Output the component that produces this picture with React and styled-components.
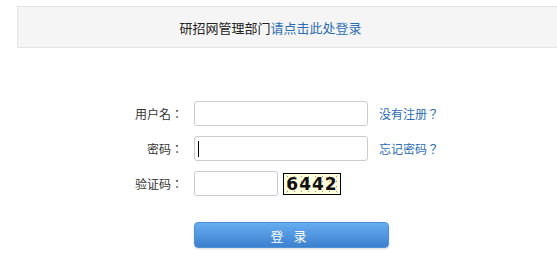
import React from 'react';
import styled, { createGlobalStyle } from 'styled-components';

const GlobalStyle = createGlobalStyle`
  html, body {
    margin: 0;
    padding: 0;
    background: #ffffff;
    overflow: hidden;
  }
  body {
    font-family: "Liberation Sans", "Noto Sans CJK SC", sans-serif;
    color: #333333;
  }
`;

const Page = styled.div`
  width: 557px;
  height: 271px;
  padding-top: 6px;
  box-sizing: border-box;
`;

const NoticeBar = styled.div`
  margin-left: 17px;
  width: 545px;
  height: 42px;
  box-sizing: border-box;
  border: 1px solid #e4e4e4;
  background: #f5f5f5;
  padding-right: 38px;
  display: flex;
  align-items: center;
  justify-content: center;
  font-size: 13px;
  color: #222222;
`;

const NoticeLink = styled.a`
  color: #2b6db5;
  text-decoration: none;
  cursor: pointer;
`;

const Form = styled.form`
  margin-top: 53px;
  padding-left: 122px;
  display: grid;
  grid-template-columns: 61px 174px auto;
  column-gap: 11px;
  row-gap: 10px;
  align-items: center;
  font-size: 12px;
  font-family: "Noto Sans CJK TC", sans-serif;
`;

const Label = styled.label`
  text-align: right;
  color: #333333;
  white-space: nowrap;
`;

const FieldWrap = styled.div`
  position: relative;
  display: flex;
  align-items: center;
  gap: 5px;
  grid-column: ${(p) => (p.$wide ? '2 / 4' : 'auto')};
`;

const Input = styled.input`
  width: ${(p) => p.$width || 174}px;
  height: 25px;
  box-sizing: border-box;
  border: 1px solid #cccccc;
  border-radius: 3px;
  padding: 0 4px;
  font-size: 12px;
  outline: none;
  background: #ffffff;
`;

const Caret = styled.span`
  position: absolute;
  left: 4px;
  top: 5px;
  width: 1px;
  height: 16px;
  background: #000000;
`;

const HelpLink = styled.a`
  color: #2b6db5;
  text-decoration: none;
  white-space: nowrap;
  cursor: pointer;
`;

const Captcha = styled.span`
  width: 58px;
  height: 22px;
  box-sizing: border-box;
  border: 1px solid #000000;
  background-color: #fffddc;
  background-image: radial-gradient(circle, #9a9a7a 0.6px, transparent 0.8px);
  background-size: 7px 5px;
  display: flex;
  align-items: center;
  justify-content: center;
  font-family: "DejaVu Sans", sans-serif;
  font-weight: bold;
  font-size: 17px;
  letter-spacing: 1px;
  color: #111111;
  margin-top: 1px;
`;

const SubmitRow = styled.div`
  grid-column: 2 / 4;
  margin-top: 16px;
`;

const SubmitButton = styled.button`
  width: 195px;
  height: 26px;
  border: 1px solid #4f8fd6;
  border-radius: 4px;
  background: linear-gradient(to bottom, #66adf0, #3d80cf);
  color: #ffffff;
  font-family: "Noto Sans CJK SC", sans-serif;
  font-size: 13px;
  letter-spacing: 10px;
  padding-left: 10px;
  box-shadow: 0 1px 2px rgba(0, 0, 0, 0.15);
  cursor: pointer;
`;

export default function App() {
  return (
    <Page>
      <GlobalStyle />
      <NoticeBar>
        研招网管理部门<NoticeLink>请点击此处登录</NoticeLink>
      </NoticeBar>
      <Form onSubmit={(e) => e.preventDefault()}>
        <Label>用户名：</Label>
        <FieldWrap>
          <Input type="text" />
        </FieldWrap>
        <HelpLink>没有注册？</HelpLink>

        <Label>密码：</Label>
        <FieldWrap>
          <Input type="password" />
          <Caret />
        </FieldWrap>
        <HelpLink>忘记密码？</HelpLink>

        <Label>验证码：</Label>
        <FieldWrap $wide>
          <Input type="text" $width={84} />
          <Captcha>6442</Captcha>
        </FieldWrap>

        <SubmitRow>
          <SubmitButton type="submit">登录</SubmitButton>
        </SubmitRow>
      </Form>
    </Page>
  );
}
